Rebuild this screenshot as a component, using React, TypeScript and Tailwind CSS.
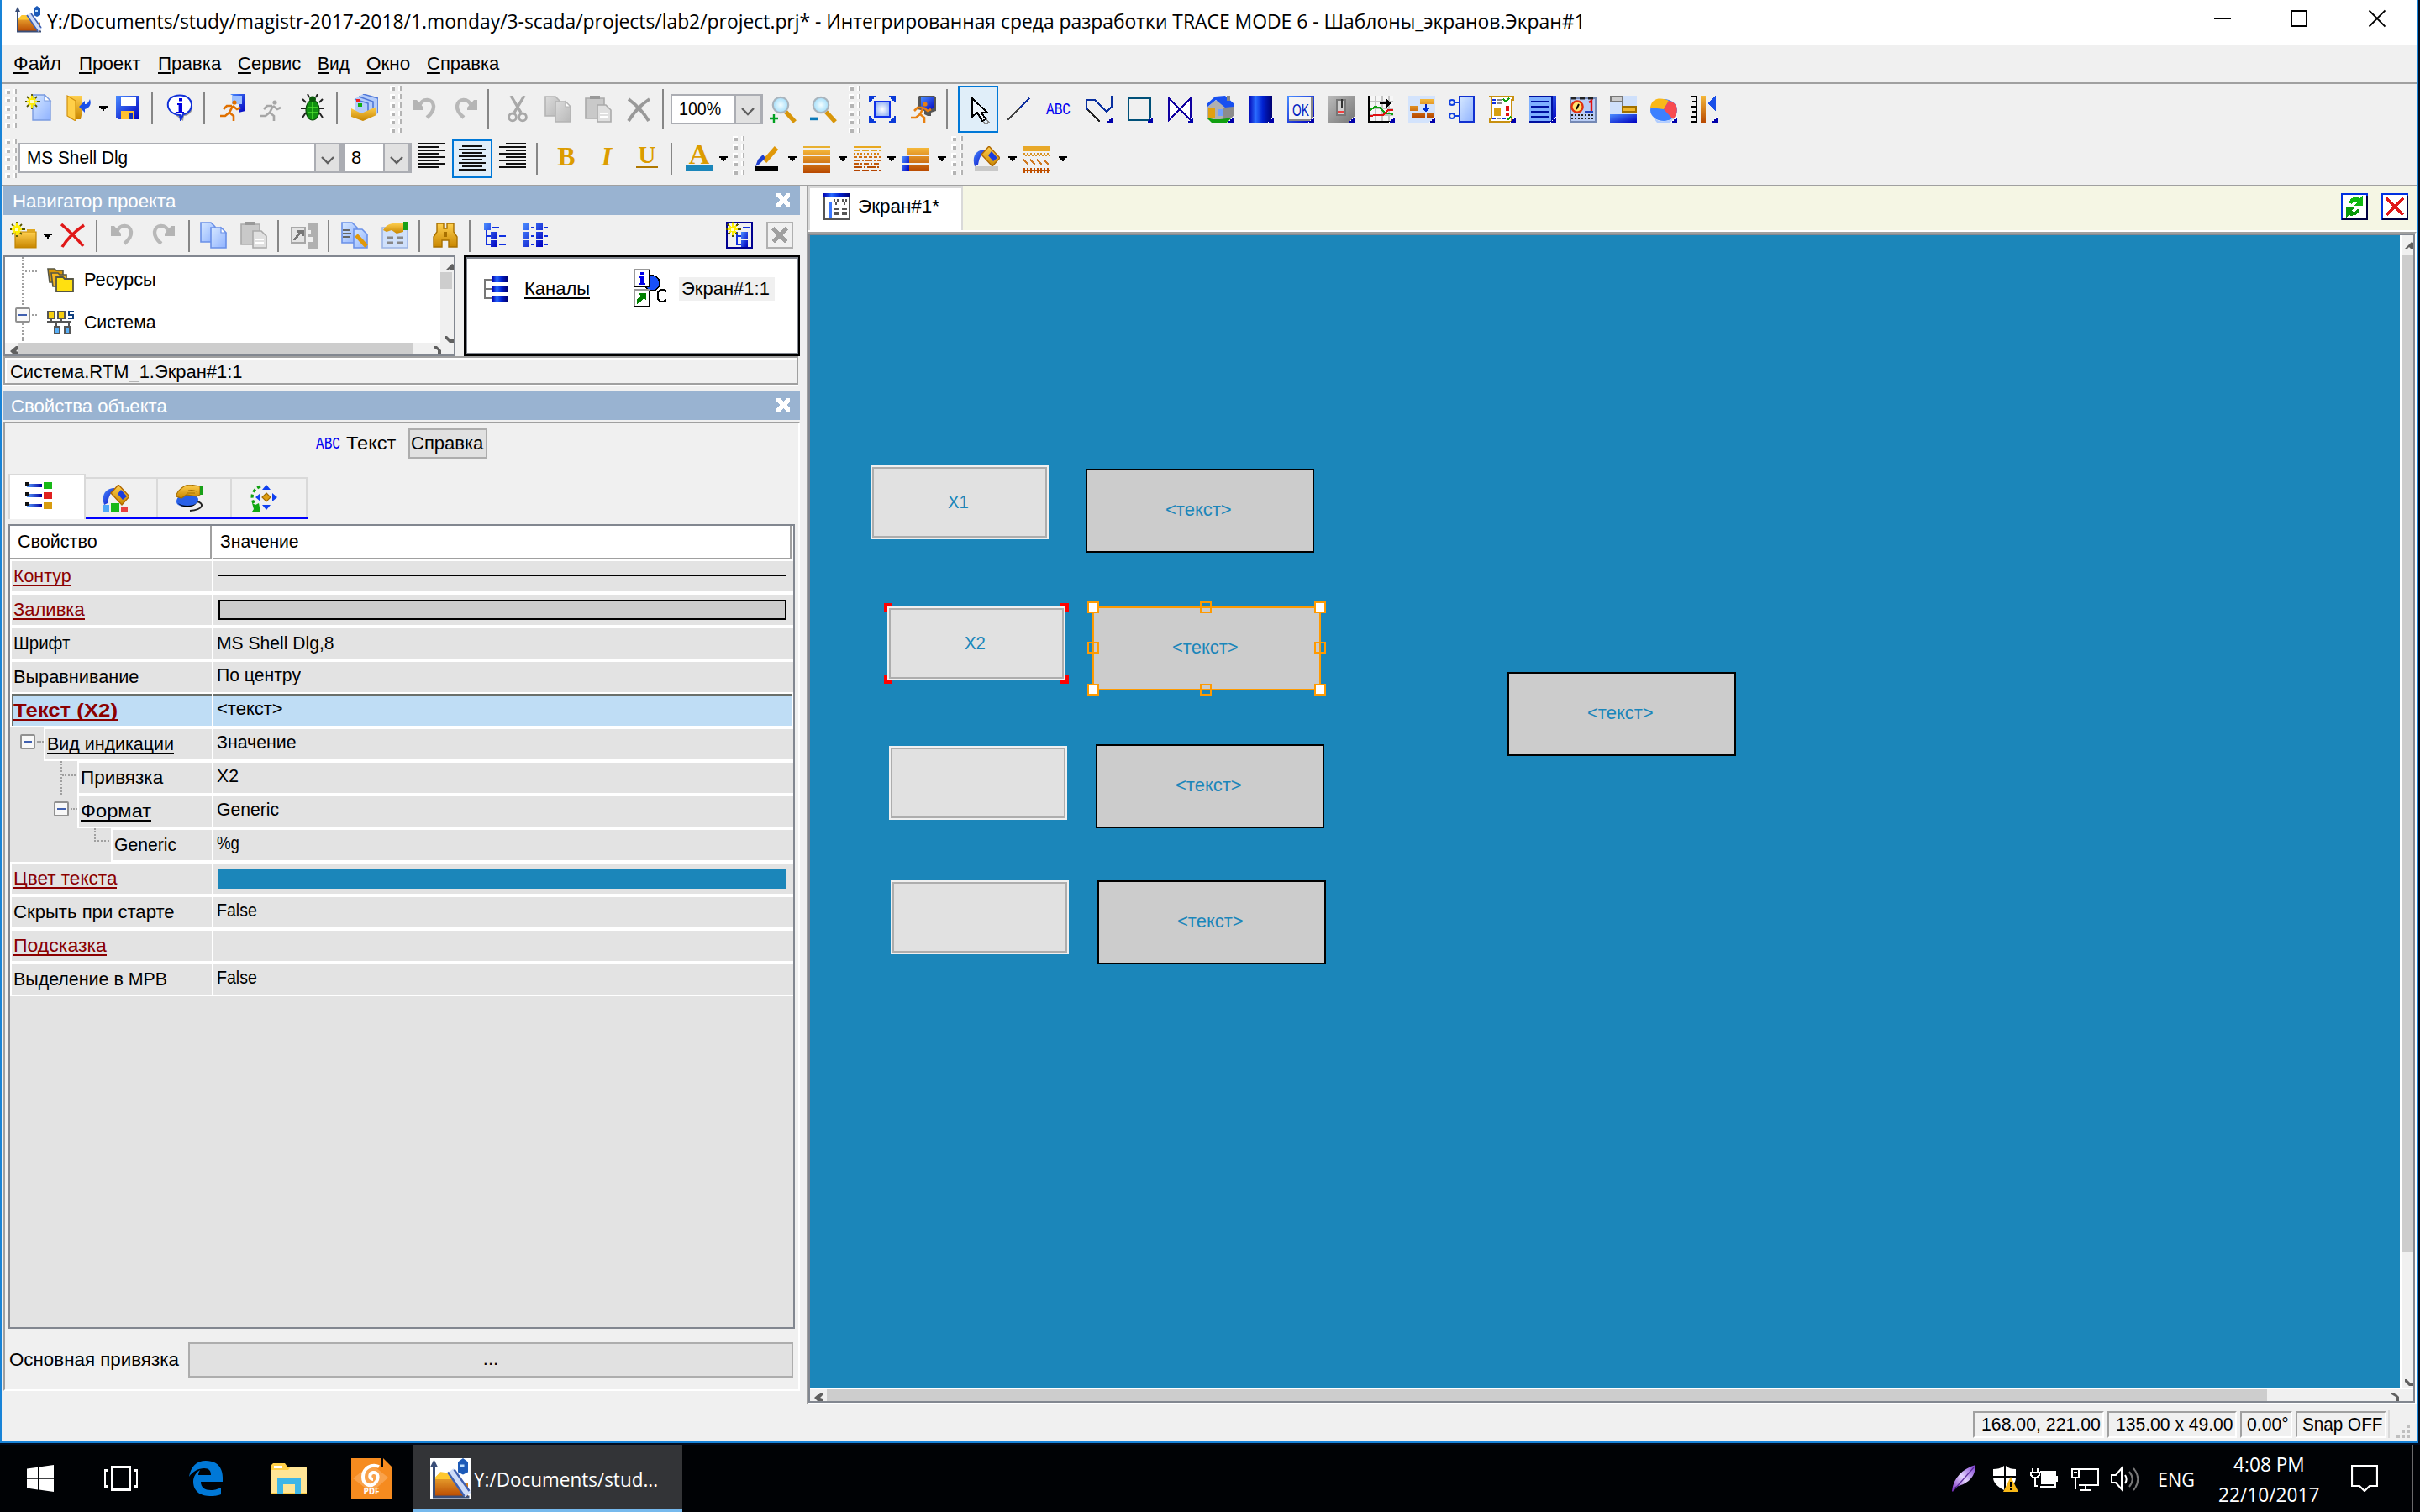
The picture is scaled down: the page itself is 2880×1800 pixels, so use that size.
import { useLayoutEffect, useRef, useState, type ReactNode } from "react";

/* Text squeezed or stretched to the width of its box. */
function T({ children, className = "" }: { children: ReactNode; className?: string }) {
  const outer = useRef<HTMLSpanElement>(null);
  const inner = useRef<HTMLSpanElement>(null);
  const [k, setK] = useState(1);
  useLayoutEffect(() => {
    if (outer.current && inner.current) setK(outer.current.clientWidth / inner.current.offsetWidth);
  }, []);
  return (
    <span ref={outer} className={"block shrink-0 whitespace-pre leading-[26px] " + className}>
      <span ref={inner} className="inline-block origin-left" style={{ transform: `scaleX(${k})` }}>
        {children}
      </span>
    </span>
  );
}

function I({ children, className = "", box = "0 0 16 16", size = "h-8 w-8", smooth = false }: { children: ReactNode; className?: string; box?: string; size?: string; smooth?: boolean }) {
  return (
    <svg viewBox={box} className={`block shrink-0 ${size} ${className}`} shapeRendering={smooth ? "auto" : "crispEdges"} fill="none">
      {children}
    </svg>
  );
}

const Sep = ({ className }: { className: string }) => <div className={"w-0.5 shrink-0 bg-[#868686] " + className} />;

function Grip({ className, n = 5 }: { className: string; n?: number }) {
  return (
    <div className={"flex w-3.5 shrink-0 flex-col gap-1 " + className}>
      {Array.from({ length: n }, (_, i) => (
        <div key={i} className="flex h-1.5 gap-1">
          <div className="h-1.5 w-1.5 border-l-2 border-t-2 border-white bg-[#b4b4b4]" />
          <div className="h-1.5 w-1 border-l-2 border-white bg-[#b4b4b4]" />
        </div>
      ))}
    </div>
  );
}

const Arrow = ({ className }: { className: string }) => (
  <I className={className} size="h-[6px] w-[10px]" box="0 0 5 3">
    <path d="M0 0h5v1h-1v1h-1v1h-1v-1h-1v-1h-1z" fill="#000" />
  </I>
);

const Chevron = () => (
  <svg viewBox="0 0 16 10" className="h-2.5 w-4" fill="none" stroke="#606060" strokeWidth="2.4">
    <path d="M1 1l7 7 7-7" />
  </svg>
);

function Combo({ className, value, text }: { className: string; value: string; text: string }) {
  return (
    <div className={"flex h-9 shrink-0 border-2 border-[#abadb3] bg-white " + className}>
      <T className={"mt-[3px] ml-2 " + text}>{value}</T>
      <div className="ml-auto flex h-8 w-8 items-center justify-center border-x-2 border-[#abadb3] bg-[#e1e1e1] pt-1.5">
        <Chevron />
      </div>
    </div>
  );
}

/* shared gradients */
const Defs = () => (
  <svg className="absolute h-0 w-0">
    <defs>
      <linearGradient id="blu" x1="0" y1="0" x2="1" y2="1"><stop stopColor="#d6e8ff" /><stop offset="1" stopColor="#8fb2ff" /></linearGradient>
      <linearGradient id="gld" x1="0" y1="0" x2="0" y2="1"><stop stopColor="#ffd050" /><stop offset="1" stopColor="#c88600" /></linearGradient>
      <linearGradient id="ora" x1="0" y1="0" x2="0" y2="1"><stop stopColor="#f5b83a" /><stop offset="1" stopColor="#b84800" /></linearGradient>
      <linearGradient id="roy" x1="0" y1="0" x2="1" y2="1"><stop stopColor="#4a8cff" /><stop offset="1" stopColor="#0000c0" /></linearGradient>
      <linearGradient id="cyl" x1="0" y1="0" x2="1" y2="0"><stop stopColor="#0000b0" /><stop offset=".3" stopColor="#2a6cff" /><stop offset=".6" stopColor="#0020d0" /><stop offset="1" stopColor="#000070" /></linearGradient>
      <linearGradient id="bar" x1="0" y1="0" x2="1" y2="0"><stop stopColor="#5aa0ff" /><stop offset="1" stopColor="#0000a0" /></linearGradient>
      <linearGradient id="gry" x1="0" y1="0" x2="1" y2="1"><stop stopColor="#dcdcdc" /><stop offset="1" stopColor="#b8b8b8" /></linearGradient>
      <linearGradient id="sw" x1="0" y1="0" x2="1" y2="1"><stop stopColor="#bbb" /><stop offset="1" stopColor="#777" /></linearGradient>
      <radialGradient id="lens"><stop stopColor="#f2fdff" /><stop offset="1" stopColor="#a4defa" /></radialGradient>
      <radialGradient id="fr"><stop stopColor="#fff" /><stop offset="1" stopColor="#9bb8f5" /></radialGradient>
      <linearGradient id="nib" x1="1" y1="0" x2="0" y2="1"><stop stopColor="#7a3ad0" /><stop offset=".5" stopColor="#e4d4ff" /><stop offset="1" stopColor="#7424c0" /></linearGradient>
    </defs>
  </svg>
);

const Corner = () => (
  <>
    <path d="M12 16l4-4v4z" fill="#fff" />
    <path d="M13 16v-1h1v-1h1v-1h1v3z" fill="#00a" />
  </>
);

const Star = () => (
  <>
    <path d="M4 0v9M0 4.500h9M1 1.500l6 6M7 1.500l-6 6" stroke="#555500" strokeWidth=".9" />
    <path d="M4 1v7M1 4.500h6M2 2.500l4 4M6 2.500l-4 4" stroke="#ffee00" strokeWidth="1.300" />
    <path d="M3 3.500h2v2h-2z" fill="#ffffc0" />
  </>
);

const Runner = ({ c }: { c: string }) => (
  <>
    <circle cx="9.5" cy="5" r="1.3" fill={c} />
    <path d="M8.500 7l-2 4 2.500 2v3M7 10.500l-3 2.500h-3M8.500 7l2.500 2 2-1M8 7h-3l-2 2" stroke={c} strokeWidth="1.300" />
  </>
);

const Undo = ({ flip = false, s = "" }: { flip?: boolean; s?: string }) => (
  <I className={s} smooth>
    <g transform={flip ? "matrix(-1 0 0 1 15 0)" : "translate(1 0)"}>
      <path d="M3.500 6c2-5 8-4.500 8.500 0 .2 3-1.500 5-4 7" stroke="#b8b8b8" strokeWidth="2.200" />
      <path d="M0 2.500v6h6v-1.500l-4-4.500z" fill="#b4b4b4" />
    </g>
  </I>
);

const Copy = ({ f, st, s = "" }: { f: string; st: string; s?: string }) => (
  <I className={s} smooth>
    <path d="M.5.5h6l2.500 2.500v9h-8.500z" fill={f} stroke={st} strokeWidth=".8" />
    <path d="M6.500 3.500h6l3 3v9h-9z" fill={f} stroke={st} strokeWidth=".8" />
    <path d="M12.500 3.500v3h3z" fill="#fff" stroke={st} strokeWidth=".6" />
  </I>
);

const Paste = ({ s = "" }: { s?: string }) => (
  <I className={s} smooth>
    <path d="M.5 1.500h11v12h-11z" fill="#c9c9c9" stroke="#aaa" strokeWidth=".8" />
    <path d="M3 0h6v2h-6z" fill="#999" />
    <path d="M7.500 5.500h5l3 3v7h-8z" fill="#e0e0e0" stroke="#aaa" strokeWidth=".8" />
    <path d="M9 10.500h5M9 12.500h5" stroke="#fff" />
  </I>
);

const AppIcon = ({ className = "", size = "h-8 w-8", bg = "none" }: { className?: string; size?: string; bg?: string }) => (
  <I className={className} size={size} smooth>
    <path d="M0 0h16v16h-16z" fill={bg} />
    <path d="M2 8l2-2.500 3.500.3 4.500 5 3-1v5.500h-13z" fill="url(#ora)" />
    <path d="M2 7.500l2-2 3.500.3 2 2.500h-7.500z" fill="#ffc830" />
    <path d="M1.500 2v13.300h14" stroke="#3a4e78" strokeWidth="1" />
    <path d="M0 3.500l1.500-3 1.500 3z" fill="#3a4e78" />
    <path d="M8 5l7 9.500" stroke="#cfdcf8" strokeWidth="3" />
    <path d="M7 5.500l6.500 9.500M9.500 4.500l6 8.500" stroke="#4060b0" strokeWidth=".8" />
    <path d="M11 1.500l2-1.500 2 1.500v4l-2 1-2-1z" fill="#1c5ab8" />
    <path d="M12 3h1.500" stroke="#bfe0ff" />
  </I>
);

const Abc = ({ className = "" }: { className?: string }) => (
  <I className={className} smooth>
    <text x=".5" y="11" fontFamily="Liberation Mono" fontSize="10.5" textLength="14.5" lengthAdjust="spacingAndGlyphs" fill="#0000f0">ABC</text>
  </I>
);

const Lens = ({ plus = false }: { plus?: boolean }) => (
  <I className={plus ? "mt-3.5 ml-2" : "mt-3.5 ml-4"} smooth>
    <path d="M9.500 9.500l5.500 6" stroke="#d8960a" strokeWidth="2.600" />
    <circle cx="6.500" cy="5.500" r="4.600" fill="url(#lens)" stroke="#a9b4bd" strokeWidth="1.100" />
    {plus ? <path d="M2.500 11v5M0 13.500h5" stroke="#00a020" strokeWidth="1.200" /> : <path d="M0 13.700h5" stroke="#0878b8" strokeWidth="1.800" />}
  </I>
);

const Bucket = ({ className, children }: { className: string; children: ReactNode }) => (
  <I className={className} smooth>
    <path d="M1 12c-2-6 1-10 6-10l1 2c-3 0-4 2-5 7z" fill="url(#roy)" />
    <path d="M9.500 0l6.500 7-4.500 5-6.500-7z" fill="url(#gld)" stroke="#b06800" strokeWidth=".7" />
    <path d="M11 3l3.500 4-2.500 2-3-3.500z" fill="#1a3ce0" />
    {children}
  </I>
);

const AlignLines = ({ x, w, className }: { x: number[]; w: number[]; className: string }) => (
  <I className={className}>
    {x.map((v, i) => <path key={i} d={`M${v} ${i * 2 + 0.5}h${w[i]}`} stroke="#111" strokeWidth="1" />)}
  </I>
);

const bmt = " mt-3.5 ml-4";

function TopBars() {
  return (
    <>
      <div className="flex h-[54px] items-start bg-white">
        <AppIcon className="mt-[7px] ml-4" />
        <T className="ml-[6px] mt-2 w-[1831px] font-['Open_Sans'] text-[24px] leading-[33px]">Y:/Documents/study/magistr-2017-2018/1.monday/3-scada/projects/lab2/project.prj* - Интегрированная среда разработки TRACE MODE 6 - Шаблоны_экранов.Экран#1</T>
        <svg viewBox="0 0 204 24" className="ml-auto mr-[37px] mt-2.5 h-6 w-[204px] shrink-0" fill="none" stroke="#000" strokeWidth="2">
          <path d="M0 12h20M92 3h18v18h-18z" shapeRendering="crispEdges" />
          <path d="M184.500 2.500l19 19M203.500 2.500l-19 19" strokeWidth="1.800" />
        </svg>
      </div>
      <div className="flex h-[46px] items-start border-b-2 border-[#a0a0a0] pt-[9px] pl-3.5">
        {[["Ф", "айл", "w-[57px]"], ["П", "роект", "ml-[21px] w-[73px]"], ["П", "равка", "ml-[21px] w-[75px]"], ["С", "ервис", "ml-5 w-[75px]"], ["В", "ид", "ml-5 w-[38px]"], ["О", "кно", "ml-5 w-[52px]"], ["С", "правка", "ml-5 w-[86px]"]].map(([a, b, c], i) => (
          <T key={i} className={c}><span className="underline decoration-2 underline-offset-[3px]">{a}</span>{b}</T>
        ))}
      </div>
      <div className="flex h-[60px] items-start">
        <Grip className="ml-1 mt-1.5" />
        <I className="mt-3 ml-[10px]" smooth>
          <path d="M4.500.5h7l3.500 3.500v11.500h-10.500z" fill="url(#blu)" stroke="#7a9be0" strokeWidth=".7" />
          <path d="M11.500.5v3.500h3.500z" fill="#fff" stroke="#7a9be0" strokeWidth=".6" />
          <Star />
        </I>
        <I className="mt-3 ml-4" smooth>
          <path d="M1 1h9v9l-1 5h-6l-2-4z" fill="url(#gld)" />
          <path d="M1 1l5 3v12l-5-3z" fill="#ffcf48" stroke="#d09010" strokeWidth=".6" />
          <path d="M14.500 3c1 3 0 5-3 6v2l-3.500-3.500 3.500-3.500v2c1.500 0 2-1 3-3z" fill="#1a50e8" />
        </I>
        <Arrow className="mt-[26px] ml-2" />
        <I className="mt-3 ml-2">
          <path d="M1 1h14v14h-13l-1-1z" fill="url(#roy)" />
          <path d="M4 2h9v5h-9z" fill="#fff" />
          <path d="M4 10h8v5h-8z" fill="#ffc030" />
          <path d="M9 11h2v4h-2z" fill="#1030c0" />
        </I>
        <Sep className="mt-2.5 ml-3 h-[38px]" />
        <I className="mt-3 ml-4" smooth>
          <path d="M9 1.500c9 1 8 11 1.500 11.500l-.5 3-4-3" fill="#9a9a9a" />
          <path d="M8 .7c-9.500 0-9.500 11 0 11.800l.5 3 1.500-3.500c7-1 7-11.300-2-11.300z" fill="#fff" stroke="#1030d8" strokeWidth="1" />
          <path d="M7.500 2.500h2v1.700h-2zM6.500 5.500h3v5h1v1h-4.500v-1h1.300v-4h-.8z" fill="#0000e0" />
        </I>
        <Sep className="mt-2.5 ml-3 h-[38px]" />
        <I className="mt-3 ml-4" smooth>
          <path d="M7 0h9v10l-4 1v-8z" fill="url(#roy)" />
          <path d="M8 1h6v5h-6z" fill="#9cc0ff" />
          <Runner c="#e07000" />
        </I>
        <I className="mt-3 ml-4" smooth><Runner c="#a6a6a6" /></I>
        <I className="mt-3 ml-4" smooth>
          <path d="M4 5l-2-2M12 5l2-2M4 8.500h-3M12 8.500h3M4 11l-2 3M12 11l2 3M6 2l-1-2M10 2l1-2" stroke="#222" strokeWidth="1" />
          <ellipse cx="8" cy="9.500" rx="4" ry="6" fill="#109010" stroke="#084a08" strokeWidth=".6" />
          <ellipse cx="8" cy="3" rx="2" ry="1.700" fill="#0a5a0a" />
          <path d="M8 5v10M5 8l6 0M5 11h6" stroke="#50e030" strokeWidth=".7" />
        </I>
        <Sep className="mt-2.5 ml-3 h-[38px]" />
        <I className="mt-3 ml-4" smooth>
          <path d="M2 3l5-3 9 2.500v9l-6 3-8-2z" fill="#b4ccfa" />
          <path d="M2 3l8 2.500v7M4.500 1.500l8.500 3v7M7 0l9 2.500M16 2.500v9" stroke="#5078d8" strokeWidth=".8" />
          <path d="M3 3h2v2h-2z" fill="#f02020" /><path d="M4 5.500h2.500v2h-2.500z" fill="#10b010" />
          <path d="M0 8.500l6 3 9-4v5l-8 3.500-7-2.500z" fill="url(#gld)" />
        </I>
        <Grip className="mt-0.5 ml-[14px]" n={6} />
        <Undo s="mt-3.5 ml-3" />
        <Undo flip s={bmt} />
        <Sep className="mt-1.5 ml-2.5 h-12" />
        <I className="mt-3.5 ml-[18px]" smooth>
          <path d="M4 0l6 10M12 0l-6 10" stroke="#a8a8a8" strokeWidth="1.700" />
          <circle cx="5" cy="12.700" r="2.200" stroke="#a8a8a8" strokeWidth="1.400" />
          <circle cx="11" cy="12.700" r="2.200" stroke="#a8a8a8" strokeWidth="1.400" />
        </I>
        <Copy f="url(#gry)" st="#b4b4b4" s={bmt} />
        <Paste s={bmt} />
        <I className={bmt} smooth><path d="M2 2c4 3 9 8 12 13M14.500 2c-4.500 3-9.500 8-12.500 13" stroke="#999" strokeWidth="1.900" /></I>
        <Sep className="mt-1.5 ml-3 h-12" />
        <Combo className="mt-3 ml-2 w-[110px]" value="100%" text="w-[50px]" />
        <Lens plus />
        <Lens />
        <Grip className="mt-0.5 ml-[14px]" n={6} />
        <I className="mt-3.5 ml-2.5">
          <path d="M3.500 3.500h9v9h-9z" fill="url(#fr)" stroke="#1030e8" />
          <path d="M0 0h4v1h-1v1h-1v1h-1v1h-1zM16 0h-4v1h1v1h1v1h1v1h1zM0 16h4v-1h-1v-1h-1v-1h-1v-1h-1zM16 16h-4v-1h1v-1h1v-1h1v-1h1z" fill="#0a3ad8" />
        </I>
        <I className={bmt} smooth>
          <path d="M5 1l1-1h9l1 1v8l-3 1v2h-2l-2-1v-2l-4-1z" fill="#555" />
          <path d="M7 1h8v6l-4 2-4-1z" fill="url(#roy)" />
          <Runner c="#e88010" />
        </I>
        <Sep className="mt-1.5 ml-3 h-12" />
        <div className="ml-3 mt-0.5 h-14 w-12 shrink-0 border-2 border-[#0078d7] bg-[#e0eef9]">
          <I className="mt-3 ml-1.5">
            <path d="M8.500 11l2-1 4 5-2 1z" fill="#e0eef9" stroke="#888" />
            <path d="M2.500.5v11l3-2.500 3 5 2-1-2.500-4h3.500z" transform="translate(2 0)" fill="#eef5fb" stroke="#000" />
          </I>
        </div>
        <I className="mt-3.5 ml-2"><path d="M1.500 14.500l7-7" stroke="#444" strokeWidth="1" /><path d="M8.500 7.500l6-6" stroke="#1030a0" /></I>
        <Abc className={bmt} />
        <I className={bmt}><path d="M8.500 15.500l-8-8v-5h5l7 7 3-3v-6.500" stroke="#0a30a0" /><path d="M8.500 15.500l-7-7" stroke="#222" /><Corner /></I>
        <I className={bmt}><path d="M1.500 1.500h13v13h-13z" fill="#f0f0f0" stroke="#005078" /><Corner /></I>
        <I className={bmt}><path d="M1.500 1.500l13 13v-13l-13 13z" fill="#fff" stroke="#1000a0" /><Corner /></I>
        <I className={bmt} smooth>
          <path d="M0 7l5-4 4 0 7 3v7l-6 3-10-2z" fill="#b0b0b0" />
          <path d="M10 7l6-1v7l-6 3z" fill="#8c8c8c" />
          <path d="M0 5l5-4.500 6-.5 5 4.500v2l-5 .5-5.500-4.500-5.500 4.500z" fill="#1850f0" />
          <path d="M1 7.500h4v6h-4z" fill="#e0a010" /><path d="M6.500 8h3v4h-3z" fill="#70a0ff" /><path d="M12 0h2v3h-2z" fill="#888" />
          <path d="M0 13l4 1 4 0 8-1-4 3h-9z" fill="#10a010" /><Corner />
        </I>
        <I className={bmt}><path d="M1 0h14v16h-14z" fill="url(#cyl)" /><Corner /></I>
        <I className={bmt}>
          <path d="M.5.5h15v15h-15z" fill="#f4f4f4" stroke="url(#roy)" /><path d="M14.500 1v14M1 14.500h14" stroke="#888" />
          <text x="3" y="12" fontFamily="Liberation Sans" fontSize="10" textLength="10" lengthAdjust="spacingAndGlyphs" fill="#0020c0">OK</text><Corner />
        </I>
        <I className={bmt}>
          <path d="M0 0h16v16h-16z" fill="url(#sw)" /><path d="M5.500 2.500h5v9h-5z" fill="#d0d0d0" stroke="#777" /><path d="M8.500 2v5" stroke="#333" strokeWidth="1.200" /><path d="M6 9.500h4" stroke="#f04040" /><Corner />
        </I>
        <I className={bmt}>
          <path d="M1 0h14v15h-14z" fill="#f6f6f6" /><path d="M4.500 0v15M8.500 0v15M12.500 0v15M1 3.500h14M1 7.500h14M1 11.500h14" stroke="#c4c4c4" />
          <path d="M.5 0v15.500h15" stroke="#000" /><path d="M7 4.500h6" stroke="#000" /><path d="M11 2l3 2.500-3 2.500z" fill="#000" />
          <path d="M1 9l3-2.500 3 .5 3 3 5 1" stroke="#10a010" /><path d="M1 12l4-.5 4 0 3-3h3" stroke="#e01010" /><Corner />
        </I>
        <I className={bmt}>
          <path d="M0 0h16v16h-16z" fill="#d3e3fc" /><path d="M7 2h8v3h-8zM1 6h5v3h-5zM2 10h8v3h-8zM11 10h4v3h-4z" fill="url(#ora)" />
          <path d="M10.500 5v2" stroke="#0020c0" /><path d="M8 7h5l-2.500 3z" fill="#0030d0" /><Corner />
        </I>
        <I className={bmt} smooth>
          <path d="M6.500.5h8.500v15h-8.500z" fill="url(#blu)" stroke="#1030d0" /><circle cx="2" cy="4" r="1.500" stroke="#1040e0" strokeWidth="1" /><circle cx="2" cy="12" r="1.500" stroke="#1040e0" strokeWidth="1" /><path d="M3.500 4h3M3.500 12h3" stroke="#1040e0" />
        </I>
        <I className={bmt}>
          <path d="M1 .5h13.500v2h-1v13h-13v-2h1v-12.500z" fill="#fff" stroke="#c89010" />
          <path d="M2 2.500h2M2 4.500h2M2 13.500h2M8 13.500h2" stroke="#1030e0" /><path d="M5 2.500h3M5 4.500h3M5 13.500h2" stroke="#888" /><path d="M8.500 2l1.500 1.500 2-2M11 14.500l2-2" stroke="#10a010" /><path d="M3 7h4v5h-4z" fill="#d8a010" /><path d="M10 6h2v3h-2zM10 10h2v2h-2z" fill="#e01010" /><Corner />
        </I>
        <I className={bmt}>
          <path d="M0 0h16v16h-16z" fill="url(#roy)" /><path d="M0 1h13v15h-13z" fill="#7fb0ff" /><path d="M1 3.500h11M1 6.500h11M1 9.500h11M1 12.500h11" stroke="#0010a0" /><path d="M0 15.500h13M13.500 1v15M0 .5h14" stroke="#0010a0" /><Corner />
        </I>
        <I className={bmt} smooth>
          <path d="M.5 1.500h15v14h-15z" fill="#b9cdf5" stroke="#7488b4" /><path d="M1 1.500h3M6 1.500h3M11 1.500h3" stroke="#222" strokeWidth="1.400" />
          <circle cx="4.500" cy="6.500" r="3.300" fill="#ffe070" stroke="#e03010" strokeWidth="1.200" /><path d="M4 8l1.500-3" stroke="#000" />
          <path d="M11.500 4l1.500-1v6" stroke="#e01010" strokeWidth="1.200" /><path d="M9 9.500h5" stroke="#2040c0" /><path d="M1 11.500h14M1 13.500h14" stroke="#222" strokeDasharray="1 1" />
        </I>
        <I className={bmt}>
          <path d="M0 0h16v16h-16z" fill="#cfe0fb" /><path d="M.5.5h7v3h-7z" fill="#ccc" stroke="#777" /><path d="M7.500 3v4h2" stroke="#777" /><path d="M7.500 6.500h8v3h-8z" fill="#f0b830" stroke="#a07000" /><path d="M0 11h16v5h-16z" fill="url(#roy)" />
        </I>
        <I className={bmt} smooth>
          <ellipse cx="8" cy="8.500" rx="8" ry="6.500" fill="#3c80ff" /><path d="M0 7c1-7 8-5.500 11-4l-3 5z" fill="#f8b818" /><path d="M11 3c6 1 6 8 2.500 11l-5.500-6z" fill="#f84a50" /><path d="M1 12c3 4 9 4 13 1l-2 3h-8z" fill="#b0ccff" /><Corner />
        </I>
        <I className={bmt}>
          <path d="M3.500 0v16M0 .5h3M1 3.500h3M0 6.500h3M1 9.500h3M0 12.500h3M0 15.500h4" stroke="#000" /><path d="M6 0h3v16h-3z" fill="url(#ora)" /><path d="M15 0v9l-5-4.500z" fill="#1a50e8" /><Corner />
        </I>
      </div>
      <div className="flex h-[62px] items-start border-b-2 border-[#a0a0a0]">
        <Grip className="ml-1 mt-1.5" />
        <Combo className="ml-0.5 mt-2.5 w-[386px]" value="MS Shell Dlg" text="w-[120px]" />
        <Combo className="mt-2.5 w-[82px]" value="8" text="w-[12px]" />
        <AlignLines className="mt-2.5 ml-2" x={[0, 0, 0, 0, 0, 0, 0, 0]} w={[16, 12, 16, 12, 16, 12, 16, 12]} />
        <div className="ml-2 mt-1.5 h-[46px] w-12 shrink-0 border-2 border-[#0078d7] bg-[#e0eef9]">
          <AlignLines className="mt-[5px] ml-1.5" x={[2, 0, 2, 0, 2, 0, 2, 0]} w={[12, 16, 12, 16, 12, 16, 12, 16]} />
        </div>
        <AlignLines className="mt-2.5 ml-2" x={[4, 0, 4, 0, 4, 0, 4, 0]} w={[12, 16, 12, 16, 12, 16, 12, 16]} />
        <Sep className="mt-2.5 ml-3 h-[38px]" />
        <span className="ml-[18px] mt-[8px] w-8 text-center font-['Liberation_Serif'] text-[32px] font-bold leading-[36px] text-[#dc9c00]">B</span>
        <span className="ml-4 mt-[8px] w-8 text-center font-['Liberation_Serif'] text-[32px] font-bold italic leading-[36px] text-[#dc9c00]">I</span>
        <div className="ml-4 mt-[5px] flex w-8 justify-center"><span className="h-[35px] w-[26px] border-b-2 border-[#b07800] text-center font-['Liberation_Serif'] text-[29px] font-bold leading-[38px] text-[#dc9c00]">U</span></div>
        <Sep className="mt-2.5 ml-3 h-[38px]" />
        <div className="ml-4 mt-[9px] h-[34px] w-8 border-b-[6px] border-[#1b86ba] text-center font-['Liberation_Serif'] text-[34px] font-bold leading-[30px] text-[#dc9c00]">A</div>
        <Arrow className="mt-[26px] ml-2" />
        <Grip className="ml-1.5 mt-0.5" n={5} />
        <I className="mt-3.5 ml-2.5" smooth>
          <path d="M1 12h14v3h-14z" fill="#000" /><path d="M14 1l-7 8" stroke="#e09808" strokeWidth="3" /><path d="M7.500 7l-4 4-2 1 1.500-4 3-3z" fill="#2040d0" />
        </I>
        <Arrow className="mt-[26px] ml-2.5" />
        <I className="mt-3.5 ml-2"><path d="M0 0h16v1h-16z" fill="#e8b030" /><path d="M0 2h16v3h-16zM0 6h16v4h-16zM0 11h16v5h-16z" fill="url(#ora)" /></I>
        <Arrow className="mt-[26px] ml-2.5" />
        <I className="mt-3.5 ml-2">
          <path d="M0 .5h16" stroke="#e8a820" /><path d="M0 2.500h16" stroke="#e0a020" strokeDasharray="4 1" /><path d="M0 4.500h16" stroke="#d88010" strokeDasharray="1 1" /><path d="M0 6.500h16" stroke="#d07010" strokeDasharray="2 1" />
          <path d="M0 8.500h16" stroke="#c86010" strokeDasharray="4 1 1 1" /><path d="M0 10.500h16" stroke="#c05808" strokeDasharray="3 1 1 1" /><path d="M0 12.500h16" stroke="#b84c00" strokeDasharray="5 1 1 1" /><path d="M0 14.500h16" stroke="#b44400" strokeDasharray="4 1" />
        </I>
        <Arrow className="mt-[26px] ml-2" />
        <I className="mt-3.5 ml-2"><path d="M3 1h13v4h-13zM3 6h13v4h-13zM3 11h13v4h-13z" fill="url(#ora)" /><path d="M0 6h4v4h-4zM0 11h4v4h-4z" fill="url(#roy)" /></I>
        <Arrow className="mt-[26px] ml-2.5" />
        <Grip className="ml-1.5 mt-0.5" n={5} />
        <Bucket className="mt-3.5 ml-3"><path d="M1 12h14v3h-14z" fill="#c8c8c8" /></Bucket>
        <Arrow className="mt-[26px] ml-2.5" />
        <I className="mt-3.5 ml-2">
          <path d="M0 0h16v3h-16z" fill="#e8a828" /><path d="M0 4.500h16M1 5.500h16" stroke="#d89020" strokeDasharray="1 1" /><path d="M0 8l3 3M4 8l3 3M8 8l3 3M12 8l3 3" stroke="#d07820" /><path d="M0 14.500h16" stroke="#c05000" /><path d="M0 14.500h16" stroke="#c05000" strokeWidth="3" strokeDasharray="1 1" />
        </I>
        <Arrow className="mt-[26px] ml-2.5" />
      </div>
    </>
  );
}

function PanelHead({ title, w }: { title: string; w: string }) {
  return (
    <div className="flex h-[34px] shrink-0 items-start bg-[#99b3d1] pt-[5px] text-white">
      <T className={w}>{title}</T>
      <I className="ml-auto mr-3 mt-[3px]" size="h-4 w-4" box="0 0 8 8"><path d="M0 0h2l2 2 2-2h2v2l-2 2 2 2v2h-2l-2-2-2 2h-2v-2l2-2-2-2z" fill="#fff" /></I>
    </div>
  );
}

const Minus = ({ className = "" }: { className?: string }) => (
  <div className={"flex h-[18px] w-[18px] shrink-0 items-center justify-center rounded-[2px] border-2 border-[#919191] bg-[#f8f8f8] " + className}>
    <div className="h-0.5 w-2.5 bg-[#4060b0]" />
  </div>
);

function Navigator() {
  return (
    <>
      <PanelHead title="Навигатор проекта" w="ml-[11px] w-[194px]" />
      <div className="flex h-12 shrink-0 items-start pl-2 [&>svg]:mt-2">
        <I smooth><path d="M3 6h12.500v9.500h-12.500z" fill="url(#gld)" stroke="#c08400" strokeWidth=".6" /><path d="M10 4.500h5v2h-5z" fill="#e0a820" /><Star /></I>
        <I className="mt-[22px]! ml-2" size="h-[6px] w-[10px]" box="0 0 5 3"><path d="M0 0h5v1h-1v1h-1v1h-1v-1h-1v-1h-1z" fill="#000" /></I>
        <I className="ml-2" smooth><path d="M1.500 1.500c4 3.500 9 8 13 13M15 2c-5 3.500-10 8-13 13" stroke="#e01818" strokeWidth="1.700" /></I>
        <Sep className="mt-1.5 ml-3 h-[38px]" />
        <Undo s="ml-3.5" />
        <Undo flip s="ml-4" />
        <Sep className="mt-1.5 ml-3.5 h-[38px]" />
        <Copy f="url(#blu)" st="#6a90e8" s="ml-3" />
        <Paste s="ml-4" />
        <Sep className="mt-1.5 ml-3 h-[38px]" />
        <I className="ml-[14px]"><path d="M.5 3.500h8v9h-8z" fill="#e4e4e4" stroke="#a8a8a8" /><path d="M2 11l4-5M4 5.500h3v3" stroke="#777" strokeWidth="1.500" /><path d="M10 1h6v15h-6v-4h3v-3h-3v-2h2v-2h-2z" fill="#b0b0b0" /></I>
        <Sep className="mt-1.5 ml-3 h-[38px]" />
        <I className="ml-[14px]" smooth>
          <path d="M.5.5h6l3 3v9h-9z" fill="url(#blu)" stroke="#6a90e8" strokeWidth=".8" /><path d="M7.500 4.500h5l3 3v8h-8z" fill="url(#blu)" stroke="#6a90e8" strokeWidth=".8" /><path d="M1 5h4M1 7h5M1 9h4" stroke="#666" /><path d="M9 8l6 6.500" stroke="#e09808" strokeWidth="2.400" />
        </I>
        <I className="ml-4" smooth><path d="M.5 3.500h15v12h-15z" fill="#cfe0fb" stroke="#9cb4e4" strokeWidth=".8" /><path d="M1 5c2-4 7-5 12-4v5l-4 1-3-2-3 1z" fill="url(#gld)" /><path d="M13 0h3v5h-3z" fill="#18a018" /><path d="M3 9.500h4M9 9.500h4M3 12.500h4M9 12.500h4" stroke="#888" strokeWidth="1.400" /></I>
        <Sep className="mt-1.5 ml-3 h-[38px]" />
        <I className="ml-[14px]" smooth><path d="M3 1h4v3h2v-3h4v5l2 3v6h-5v-4h-4v4h-5v-6l2-3z" fill="url(#gld)" stroke="#a87000" strokeWidth=".7" /><path d="M7 6h2v3h-2z" fill="#a87000" /></I>
        <Sep className="mt-1.5 ml-[12px] h-[38px]" />
        <I className="ml-[14px]"><path d="M2.500 4v9.500h3M2.500 8.500h3M6 3.500h4M10 8.500h4M10 13.500h4" stroke="#1030e0" /><path d="M1 1h4v4h-4zM5 6h4v4h-4zM5 11h4v4h-4z" fill="url(#roy)" /></I>
        <I className="ml-[16px]"><path d="M0 1h4v4h-4zM8 1h4v4h-4zM0 6h4v4h-4zM8 6h4v4h-4zM0 11h4v4h-4zM8 11h4v4h-4z" fill="url(#roy)" /><path d="M5 3.500h2M13 3.500h2M5 8.500h2M13 8.500h2M5 13.500h2M13 13.500h2" stroke="#1030e0" /></I>
        <I className="ml-auto"><path d="M.5.5h15v15h-15z" stroke="#000090" /><path d="M6.500 6v7.500h3M6.500 8.500h3M10 3.500h4" stroke="#1030e0" /><path d="M9 6h4v4h-4zM9 11h4v4h-4z" fill="url(#roy)" /><Star /></I>
        <I className="ml-4 mr-2"><path d="M.5.5h15v15h-15z" stroke="#b0b0b0" /><path d="M4 4l8 8M12 4l-8 8" stroke="#a0a0a0" strokeWidth="2.600" /></I>
      </div>
      <div className="flex h-[120px] shrink-0 justify-between">
        <div className="flex w-[538px] flex-wrap border-2 border-[#828790] bg-white">
          <div className="relative h-[102px] w-[518px]">
            <div className="absolute left-[20px] top-0 h-[100px] border-l-2 border-dotted border-[#a0a0a0]" />
            <div className="flex h-[50px] items-start">
              <div className="ml-6 mt-4 w-3.5 border-t-2 border-dotted border-[#a0a0a0]" />
              <I className="mt-3 ml-3 mr-3" smooth>
                <path d="M.5 1h4l1 1h4v7h-8z" fill="#d89808" stroke="#554" strokeWidth=".8" /><path d="M2.500 3.500h4l1 1h4v7h-8z" fill="#f8b820" stroke="#554" strokeWidth=".8" /><path d="M5.500 6h4l1 1h5v7.500h-10z" fill="#ffe010" stroke="#554" strokeWidth=".9" />
              </I>
              <T className="mt-[14px] w-[86px]">Ресурсы</T>
            </div>
            <div className="flex h-[50px] items-start">
              <Minus className="relative ml-3 mt-2.5" />
              <div className="ml-0.5 mt-[18px] w-[6px] border-t-2 border-dotted border-[#a0a0a0]" />
              <I className="mt-3 ml-3 mr-3"><path d="M2.500 5v2.500h10.500v3M8.500 5v2.500M5.500 7v3M0 7.500h14" stroke="#555" /><path d="M.5 1.500h4v4h-4zM6.500 1.500h4v4h-4z" fill="#f8d010" stroke="#555" /><path d="M4.500 10.500h3v4h-3zM10.500 10.500h3v4h-3z" fill="#58b0f8" stroke="#555" /><path d="M16 1.500h-3v2h2.500v2h-3" stroke="#104080" /></I>
              <T className="mt-[15px] w-[86px]">Система</T>
            </div>
          </div>
          <div className="flex h-[102px] w-4 flex-col items-end justify-between bg-[#f0f0f0]">
            <svg viewBox="0 0 10 8" className="mt-2 h-2 w-2.5"><path d="M0 8l8-8 2 1v7h-3l-2-2-2 2z" fill="#606060" /></svg>
            <div className="mr-0.5 mb-auto mt-0.5 h-5 w-3.5 bg-[#cdcdcd]" />
            <svg viewBox="0 0 10 8" className="h-2 w-2.5"><path d="M0 0v3l5 5h5v-4h-4l-4-4z" fill="#606060" /></svg>
          </div>
          <div className="flex h-[14px] w-full bg-[#f0f0f0]">
            <svg viewBox="0 0 16 14" className="h-3.5 w-4"><path d="M16 4h-3l-7 6 4 4h6v-3l-3-1 3-3z" fill="#606060" /></svg>
            <div className="h-3.5 w-[470px] bg-[#cdcdcd]" />
            <svg viewBox="0 0 10 14" className="ml-6 h-3.5 w-2.5"><path d="M0 4h4l5 5v5h-4v-5l-5-3z" fill="#606060" /></svg>
          </div>
        </div>
        <div className="flex w-[400px] items-start border-2 border-black bg-white outline-2 -outline-offset-4 outline-[#828790]">
          <I className="ml-[22px] mt-[22px]" size="h-8 w-7" box="0 0 14 16"><path d="M0 2.500h5M0 8h5M0 13.500h5M.5 2v12" stroke="#777" /><path d="M5 0h9v4h-9zM5 6h9v4h-9zM5 12h9v4h-9z" fill="url(#cyl)" /></I>
          <T className="ml-5 mt-[25px] h-[25px] w-[78px] border-b-2 border-black">Каналы</T>
          <I className="ml-[52px] mt-[14px]" size="h-[46px] w-10" box="0 0 20 23">
            <circle cx="11" cy="8.500" r="4.500" fill="#1850f8" stroke="#000" strokeWidth=".8" />
            <path d="M.5.5h9v10h-9zM.5 12.500h9v10h-9z" fill="#fff" stroke="#000" /><path d="M.5 22v-10M.5 10v-10h9M.5 12.500h9" stroke="#999" />
            <path d="M4 2h2v1.500h-2zM3 4.500h3v4h1v1h-4v-1h1v-3h-1z" fill="#0000e8" /><path d="M2 21v-3l2-2-1-1.500h4.500v4l-1.500-1-2 2z" fill="#008000" />
            <path d="M19.500 13.500l-1.500-1h-2l-1.500 1.500v4l1.500 1.500h2l1.500-1" stroke="#000" />
          </I>
          <div className="ml-3.5 mt-6 h-7 w-[114px] bg-[#f0f0f0] pl-[3px] pt-px"><T className="w-[105px]">Экран#1:1</T></div>
        </div>
      </div>
      <div className="mr-0.5 h-9 shrink-0 border-b-2 border-white">
        <div className="h-[34px] border-2 border-[#a0a0a0]"><div className="h-full border-l-2 border-t-2 border-white pl-1 pt-0.5"><T className="w-[276px]">Система.RTM_1.Экран#1:1</T></div></div>
      </div>
    </>
  );
}

type Row = { n: string; w: string; v?: ReactNode; link?: boolean; bold?: boolean; depth?: number; u?: boolean };

const val = (t: string, w: string) => <T className={"ml-1 mt-[3px] " + w}>{t}</T>;

const rows: Row[] = [
  { n: "Контур", w: "w-[69px]", link: true, v: <div className="ml-1.5 mt-4 h-0.5 w-[676px] bg-black" /> },
  { n: "Заливка", w: "w-[85px]", link: true, v: <div className="ml-1.5 mt-1.5 h-6 w-[676px] border-2 border-black bg-[#cccccc]" /> },
  { n: "Шрифт", w: "w-[67px]", v: <T className="ml-1 mt-[5px] w-[140px]">MS Shell Dlg,8</T> },
  { n: "Выравнивание", w: "w-[149px]", v: val("По центру", "w-[100px]") },
  { n: "Текст (X2)", w: "w-[124px]", link: true, bold: true, v: <T className="ml-1 mt-[3px] w-[79px]">&lt;текст&gt;</T> },
  { n: "Вид индикации", w: "w-[151px]", u: true, depth: 1, v: val("Значение", "w-[95px]") },
  { n: "Привязка", w: "w-[98px]", depth: 2, v: val("X2", "w-[26px]") },
  { n: "Формат", w: "w-[84px]", u: true, depth: 2, v: val("Generic", "w-[74px]") },
  { n: "Generic", w: "w-[74px]", depth: 3, v: val("%g", "w-[27px]") },
  { n: "Цвет текста", w: "w-[123px]", link: true, v: <div className="ml-1.5 mt-1.5 h-6 w-[676px] bg-[#1b86ba]" /> },
  { n: "Скрыть при старте", w: "w-[192px]", v: val("False", "w-[48px]") },
  { n: "Подсказка", w: "w-[111px]", link: true },
  { n: "Выделение в МРВ", w: "w-[183px]", v: val("False", "w-[48px]") },
];

const dotted = "border-dotted border-[#a0a0a0]";

function Indent({ i }: { i: number }) {
  if (i === 5)
    return (
      <div className="-my-0.5 flex h-10 w-10 items-start bg-[#e3e3e3]">
        <Minus className="ml-3 mt-2" />
        <div className={"ml-0.5 mt-4 w-2 border-t-2 " + dotted} />
      </div>
    );
  if (i === 6)
    return (
      <div className="-my-0.5 flex h-10 w-20 items-start bg-[#e3e3e3]">
        <div className={"ml-[60px] h-10 border-l-2 " + dotted} />
        <div className={"mt-4 w-4 border-t-2 " + dotted} />
      </div>
    );
  if (i === 7)
    return (
      <div className="-my-0.5 flex h-10 w-20 items-start bg-[#e3e3e3]">
        <Minus className="ml-[52px] mt-2" />
        <div className={"ml-0.5 mt-4 w-2 border-t-2 " + dotted} />
      </div>
    );
  return (
    <div className="-my-0.5 flex h-10 w-[120px] items-start bg-[#e3e3e3]">
      <div className={"ml-[100px] h-4 w-[18px] border-b-2 border-l-2 " + dotted} />
    </div>
  );
}

function Properties() {
  return (
    <>
      <PanelHead title="Свойства объекта" w="ml-[9px] w-[186px]" />
      <div className="mt-0.5 flex h-[1154px] shrink-0 flex-col border-2 border-b-white border-l-[#a0a0a0] border-r-white border-t-[#a0a0a0]">
        <div className="flex h-[58px] shrink-0 items-start">
          <Abc className="ml-[369px] mt-2" />
          <T className="ml-[5px] mt-[11px] w-[59px]">Текст</T>
          <div className="ml-[15px] mt-1.5 h-9 w-[94px] border-2 border-[#adadad] bg-[#e1e1e1] pl-px pt-[3px]"><T className="w-[86px]">Справка</T></div>
        </div>
        <div className="flex h-14 shrink-0 items-end pl-1">
          <div className="h-[54px] w-[92px] border-2 border-b-0 border-[#d9d9d9] bg-white">
            <I className="ml-[18px] mt-1.5" size="h-9 w-8" box="0 0 16 18">
              <path d="M1 2h9v2h-9zM1 8h9v2h-9zM1 14h9v2h-9z" fill="url(#bar)" /><path d="M0 1h2v2h-2zM0 7h2v2h-2zM0 13h2v2h-2z" fill="#111" />
              <path d="M11 1h5v4h-5z" fill="#18b818" /><path d="M11 7h5v4h-5z" fill="#e02020" /><path d="M11 13h5v4h-5z" fill="#d89c10" />
            </I>
          </div>
          <div className="flex h-[50px] w-[264px] border-b-2 border-b-[#0000ff] [&>div]:border-r-2 [&>div]:border-t-2 [&>div]:border-[#d9d9d9]">
            <div className="w-[86px] pl-5 pt-[7px]">
              <Bucket className=""><path d="M0 12h4v4h-4z" fill="#50a8f8" /><path d="M5 11h5v5h-5z" fill="#18b818" /><path d="M11 13h4v3h-4z" fill="#e84040" /></Bucket>
            </div>
            <div className="w-[88px] pl-[22px] pt-[7px]">
              <I smooth><path d="M12 10c5 1 4 5-4 5.500" stroke="#222" /><path d="M0 10c0-3 3-4 7-4s6 1 6 3-3 4-7 4-6-1-6-3z" fill="#2860e8" /><path d="M1 11c2 2 9 2 11 0-2 3-9 3-11 0z" fill="#000" /><path d="M0 6c1-3 5-6 8-6l6 1v5l-2 1-6-1-3 2-3-1z" fill="url(#gld)" stroke="#a87000" strokeWidth=".6" /><path d="M7 3.500c2-.5 4 0 5 .5M6 5h5" stroke="#a87000" strokeWidth=".6" /><path d="M14 1h2v5h-2z" fill="#18a018" /></I>
            </div>
            <div className="w-[90px] pl-[22px] pt-[7px]">
              <I smooth><path d="M9.500 5l2.500 2.500-2.500 2.500-2.500-2.500z" fill="#e0a010" stroke="#a06c00" strokeWidth=".6" /><path d="M9.500 0l2.500 3h-5zM9.500 15l2.500-3h-5zM3 7.500l3-2.500v5zM16 7.500l-3-2.500v5z" fill="#1040f0" /><path d="M6 1c-5 2-6 6-4 10" stroke="#10a010" strokeWidth="1.600" strokeDasharray="2 1.500" /><path d="M1 11l2 1 2-1 1 5h-5l1-1.500z" fill="#10a810" /></I>
            </div>
          </div>
        </div>
        <div className="ml-1 mt-1.5 flex h-[958px] w-[936px] shrink-0 flex-col border-2 border-[#828790] bg-[#e3e3e3]">
          <div className="flex h-10 shrink-0 bg-white">
            <div className="h-10 w-60 border-b-2 border-r-2 border-[#a0a0a0]"><T className="ml-[9px] mt-[6px] w-[95px]">Свойство</T></div>
            <div className="ml-0.5 h-10 w-[688px] border-b-2 border-r-2 border-[#a0a0a0]"><T className="ml-2 mt-[6px] w-[94px]">Значение</T></div>
          </div>
          <div className="flex shrink-0 flex-col gap-1 border-b-2 border-t-2 border-white bg-white">
            {rows.map((r, i) => (
              <div key={i} className="flex h-9">
                {r.depth ? <Indent i={i} /> : null}
                <div className={"ml-0.5 flex grow items-start " + (r.bold ? "-mt-0.5 h-[38px] border-l-2 border-t-2 border-[#6b706b] bg-[#bfddf5]" : "bg-[#e3e3e3]")}>
                  <T className={(r.bold ? "font-bold " : "ml-0.5 ") + "mt-[5px] " + r.w + (r.link ? " h-[25px] border-b-2 border-[#8b0000] text-[#8b0000]" : r.u ? " h-[25px] border-b-2 border-black" : "")}>{r.n}</T>
                </div>
                <div className={"ml-0.5 flex shrink-0 items-start " + (r.bold ? "-mt-0.5 mr-0.5 h-[38px] w-[688px] border-t-2 border-[#6b706b] bg-[#bfddf5]" : "w-[690px] bg-[#e3e3e3]")}>{r.v}</div>
              </div>
            ))}
          </div>
        </div>
        <div className="mt-4 flex items-start">
          <T className="ml-[5px] mt-[8px] w-[202px]">Основная привязка</T>
          <div className="ml-[11px] h-[42px] w-[720px] border-2 border-[#adadad] bg-[#e1e1e1] text-center leading-[36px]">...</div>
        </div>
      </div>
    </>
  );
}

const buttons = [
  { p: "left-[72px] top-[274px]", t: "X1" },
  { p: "left-[92px] top-[442px]", t: "X2" },
  { p: "left-[94px] top-[608px]", t: "" },
  { p: "left-[96px] top-[768px]", t: "" },
];
const texts = [
  "left-[328px] top-[278px] border-black",
  "left-[336px] top-[442px] border-[#ff9a00]",
  "left-[340px] top-[606px] border-black",
  "left-[342px] top-[768px] border-black",
  "left-[830px] top-[520px] border-black",
];
const reds = ["left-[88px] top-[438px]", "left-[298px] top-[438px]", "left-[88px] top-[524px]", "left-[298px] top-[524px]"];
const handles = [
  "left-[330px] top-[436px] bg-white", "left-[600px] top-[436px] bg-white", "left-[330px] top-[534px] bg-white", "left-[600px] top-[534px] bg-white",
  "left-[464px] top-[436px]", "left-[464px] top-[534px]", "left-[330px] top-[484px]", "left-[600px] top-[484px]",
];

function Editor() {
  return (
    <div className="flex h-[1450px] grow flex-col border-l-2 border-[#a0a0a0]">
      <div className="flex h-[54px] shrink-0 items-start border-b-2 border-white bg-[#f5f6e4]">
        <div className="flex h-[52px] w-[184px] items-start border-x-2 border-t-2 border-[#d9d9d9] bg-white">
          <I className="ml-4 mt-1.5"><path d="M0 0h16v16h-16z" fill="#555" /><path d="M1 2h14v13h-14z" fill="#fff" /><path d="M0 0h16v2h-16z" fill="url(#cyl)" /><path d="M3 5h2v10h-2z" fill="#3c78ff" /><path d="M6 3.500h1v2h-1zM8 3.500h1v2h-1zM7 5h1v2h-1zM11 3.500h1v2h-1zM13 3.500h1v2h-1zM12 5h1v2h-1zM6 9h3v1h-3zM6 11h3v2h-3zM11 9h3v1h-3zM11 11h3v2h-3z" fill="#555" /></I>
          <T className="ml-[9px] mt-[9px] w-[97px]">Экран#1*</T>
        </div>
        <I className="ml-auto mt-2"><path d="M.5.5h15v15h-15z" fill="#fff" stroke="#0030e0" /><path d="M.5 15.500h15v-14" stroke="#000040" /><path d="M5 6c0-4 4-4 6-3l2-1.500v6h-5l1.500-2c-2-1-3 0-3 1z" fill="#10b810" /><path d="M11 9c0 4-4 5-6 4l-2 1.500v-6h5l-1.500 2c2 1 3 0 3-1z" fill="#0a980a" /></I>
        <I className="ml-4 mr-[10px] mt-2"><path d="M.5.5h15v15h-15z" fill="#fff" stroke="#0030e0" /><path d="M.5 15.500h15v-14" stroke="#000040" /><path d="M3 3l10 10M13 3l-10 10" stroke="#e01818" strokeWidth="1.800" /></I>
      </div>
      <div className="h-[1396px] grow border-b-2 border-r-2 border-t-2 border-b-white border-r-white border-t-[#a0a0a0]">
        <div className="flex h-[1392px] flex-wrap content-start border-2 border-[#828790]">
          <div className="relative h-[1372px] w-[1892px] bg-[#1b86ba] text-[#1b86ba]">
            {reds.map((c) => <div key={c} className={"absolute h-2.5 w-2.5 bg-[#ff0000] " + c} />)}
            {buttons.map((b) => (
              <div key={b.p} className={"absolute h-[88px] w-[212px] border-2 border-[#f0f0f0] bg-[#e1e1e1] " + b.p}>
                <div className="flex h-full justify-center border-2 border-[#adadad] pt-[27px] pr-[3px]">{b.t && <T className="w-[25px]">{b.t}</T>}</div>
              </div>
            ))}
            {texts.map((c) => (
              <div key={c} className={"absolute flex h-[100px] w-[272px] justify-center border-2 bg-[#cccccc] pt-[34px] pr-[3px] " + c}>
                <T className="w-[79px]">&lt;текст&gt;</T>
              </div>
            ))}
            {handles.map((c) => <div key={c} className={"absolute h-3.5 w-3.5 border-2 border-[#ff9a00] " + c} />)}
          </div>
          <div className="flex h-[1372px] w-4 flex-col items-end border-l-2 border-white bg-[#f0f0f0]">
            <svg viewBox="0 0 10 8" className="mt-2 h-2 w-2.5"><path d="M0 8l8-8 2 1v7h-3l-2-2-2 2z" fill="#606060" /></svg>
            <div className="mt-2 h-[1186px] w-3.5 bg-[#cdcdcd]" />
            <svg viewBox="0 0 10 8" className="mb-0.5 mt-auto h-2 w-2.5"><path d="M0 0v3l5 5h5v-4h-4l-4-4z" fill="#606060" /></svg>
          </div>
          <div className="flex h-4 w-full border-t-2 border-white bg-[#f0f0f0]">
            <svg viewBox="0 0 20 14" className="h-3.5 w-5"><path d="M15 4h-3l-7 6 4 4h6v-3l-3-1 3-3z" fill="#606060" /></svg>
            <div className="h-3.5 w-[1714px] bg-[#cdcdcd]" />
            <svg viewBox="0 0 10 14" className="ml-auto mr-4 h-3.5 w-2.5"><path d="M0 4h4l5 5v5h-4v-5l-5-3z" fill="#606060" /></svg>
          </div>
        </div>
      </div>
    </div>
  );
}

const cell = "h-8 border-2 border-b-white border-l-[#a0a0a0] border-r-white border-t-[#a0a0a0] pt-px ";

function Taskbar() {
  return (
    <div className="flex h-20 items-start bg-[#000205] text-white">
      <svg viewBox="0 0 32 32" className="ml-8 mt-6 h-8 w-8" fill="#fff"><path d="M0 4.500l13-1.800v12.600h-13zM14.500 2.500l17.500-2.500v15.300h-17.500zM0 16.800h13v12.600l-13-1.800zM14.500 16.800h17.500v15.200l-17.500-2.500z" /></svg>
      <svg viewBox="0 0 40 30" className="ml-[60px] mt-[25px] h-[30px] w-10" fill="none" stroke="#fff" strokeWidth="2.400" shapeRendering="crispEdges"><path d="M9 1.500h22v27h-22zM5 5.500h-4v19h4M35 5.500h4v19h-4" /></svg>
      <svg viewBox="0 0 40 42" className="ml-[61px] mt-[19px] h-[42px] w-10"><path d="M0 19c2-12 9-19 20-19 13 0 20 8 20 20v5h-26c0 7 5 10 12 10 4 0 8-1 12-3v8c-4 1.500-8 2-13 2-13 0-20-7-20-17 0-6 3-11 8-14-1 2-2 4-2 6h15c0-5-2-8-8-8-7 0-14 4-18 10z" fill="#0078d7" /></svg>
      <svg viewBox="0 0 42 36" className="ml-[58px] mt-[22px] h-9 w-[42px]"><path d="M0 2l2-2h14l3 4h23v32h-42z" fill="#ffcf48" /><path d="M0 8h20l3-4h17l2 2v29h-42z" fill="#ffe596" /><path d="M3 3h10v3h-10z" fill="#fff" /><path d="M7 18h28v18h-7v-11h-14v11h-7z" fill="#3eb6e8" /></svg>
      <div className="relative ml-[53px] mt-4 h-12 w-12">
        <svg viewBox="0 0 48 48" className="h-12 w-12" fill="none"><path d="M0 0h36v11h12v37h-48z" fill="#f68b1f" /><path d="M38 0l10 10h-10z" fill="#f68b1f" /><path d="M24 7l20 16-20 18-22-17z" fill="#f9a24b" /><path d="M33 10c-9-4-19 2-19 12 0 9 8 13 14 8 6-6 4-14-2-13-5 1-5 8 0 8" stroke="#fff" strokeWidth="4" /></svg>
        <span className="absolute bottom-[3px] left-0 w-12 text-center font-['Open_Sans'] text-[10px] font-bold leading-3">PDF</span>
      </div>
      <div className="ml-[26px] flex h-20 w-80 items-start border-b-4 border-[#76b9ed] bg-[#333437]">
        <AppIcon className="ml-5 mt-4" size="h-12 w-12" bg="#fff" />
        <T className="ml-1 mt-6 w-[219px] font-['Open_Sans'] text-[24px] leading-[33px]">Y:/Documents/stud...</T>
      </div>
      <div className="ml-auto flex items-start font-['Open_Sans'] text-[24px]">
        <svg viewBox="0 0 28 32" className="mt-6 h-8 w-7"><path d="M28 0c0 12-6 22-24 26l-3 6-1-1c2-16 12-26 28-31z" fill="url(#nib)" /><path d="M26 3l-24 27" stroke="#5c2a9c" strokeWidth="1.200" /></svg>
        <svg viewBox="0 0 30 32" className="ml-[21px] mt-[25px] h-8 w-[30px]"><path d="M13 0c-4 3-8 4-13 4v8h13zM15 0c4 3 7 4 12 4v8h-12zM0 14h13v15c-8-4-13-9-13-15zM15 14h12c0 6-4 11-12 15z" fill="#fff" /><path d="M21 13l9 18h-18z" fill="#f8b818" /><path d="M20 19h2v6h-2zM20 27h2v2h-2z" fill="#000" /></svg>
        <svg viewBox="0 0 34 24" className="ml-[14px] mt-[27px] h-6 w-[34px]" fill="none" stroke="#fff" strokeWidth="2" shapeRendering="crispEdges"><path d="M3 1v5M9 1v5M1 6h10v3l-3 3h-4l-3-3zM6 12v10h3M12 5h18v18h-18M32 10v7" /><path d="M14 8h13v11h-13z" fill="#fff" /></svg>
        <svg viewBox="0 0 34 28" className="ml-[15px] mt-7 h-7 w-[34px]" fill="none" stroke="#fff" strokeWidth="2" shapeRendering="crispEdges"><path d="M9 1h23v19h-23M1 1h8v10h-8zM5 11v14M10 26h14M17 20v6M3 5h4" /></svg>
        <svg viewBox="0 0 34 32" className="ml-[13px] mt-[25px] h-8 w-[34px]" fill="none" stroke="#fff" strokeWidth="2"><path d="M1 11h5l7-8v25l-7-8h-5z" /><path d="M17 11c2 3 2 7 0 10" /><path d="M22 7c5 6 5 12 0 18M27 3c7 8 7 18 0 26" stroke="#777" /></svg>
        <T className="ml-[22px] mt-6 w-[44px] leading-[33px]">ENG</T>
        <div className="ml-7 mt-1.5 flex w-[120px] flex-col items-center gap-[3px]">
          <T className="w-[85px] leading-[33px]">4:08 PM</T>
          <T className="w-[120px] leading-[33px]">22/10/2017</T>
        </div>
        <svg viewBox="0 0 32 32" className="ml-[38px] mt-6 h-8 w-8" fill="none" stroke="#fff" strokeWidth="2.200"><path d="M1 1h30v24h-9l-6 6-6-6h-9z" /></svg>
        <div className="ml-10 mr-2 h-20 w-0.5 bg-[#6a6a6c]" />
      </div>
    </div>
  );
}

export default function App() {
  return (
    <div className="h-[1800px] w-[2880px] overflow-hidden bg-[#000c20] font-['Liberation_Sans',sans-serif] text-[22px] text-black">
      <Defs />
      <div className="flex h-[1718px] w-[2878px] flex-col border-x-2 border-b-2 border-[#1883d7] bg-[#f0f0f0]">
        <TopBars />
        <div className="flex h-[1450px] shrink-0">
          <div className="ml-0.5 mr-2 flex w-[948px] shrink-0 flex-col">
            <Navigator />
            <div className="h-1.5 shrink-0" />
            <Properties />
          </div>
          <Editor />
        </div>
        <div className="flex h-11 items-start justify-end gap-1 pt-2">
          <div className={cell + "w-[156px] pl-2"}><T className="w-[142px]">168.00, 221.00</T></div>
          <div className={cell + "w-[154px] pl-2"}><T className="w-[140px]">135.00 x 49.00</T></div>
          <div className={cell + "w-[62px] pl-1.5"}><T className="w-[50px]">0.00°</T></div>
          <div className={cell + "w-[108px] pl-1.5"}><T className="w-[95px]">Snap OFF</T></div>
          <div className="-ml-0.5 -mt-0.5 h-[34px] w-0.5 bg-[#d9d9d9]" />
          <I className="ml-1 mr-1.5 mt-4" size="h-4 w-[18px]" box="0 0 9 8"><path d="M6 0h2v2h-2zM3 3h2v2h-2zM6 3h2v2h-2zM0 6h2v2h-2zM3 6h2v2h-2zM6 6h2v2h-2z" fill="#bfbfbf" /></I>
        </div>
      </div>
      <div className="h-0.5" />
      <Taskbar />
    </div>
  );
}
